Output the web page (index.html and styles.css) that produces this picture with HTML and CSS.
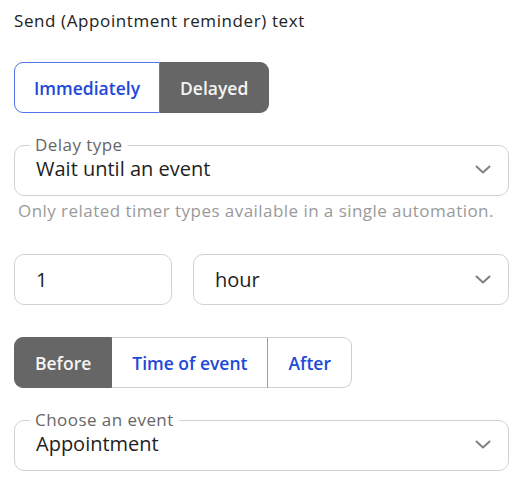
FILE: index.html
```html
<!DOCTYPE html>
<html lang="en">
<head>
<meta charset="utf-8">
<title>Send text</title>
<link rel="stylesheet" href="styles.css">
</head>
<body>
<div class="page">
  <p class="title">Send (Appointment reminder) text</p>

  <div class="seg seg-when">
    <div class="seg-btn is-focus">Immediately</div>
    <div class="seg-btn is-on">Delayed</div>
  </div>

  <fieldset class="field">
    <legend>Delay type</legend>
    <span class="value">Wait until an event</span>
    <svg class="chev" viewBox="0 0 16 9" width="16" height="9"><path d="M1.5 1.5 L8 7.5 L14.5 1.5" fill="none" stroke="#808080" stroke-width="2" stroke-linecap="round" stroke-linejoin="round"/></svg>
  </fieldset>
  <p class="help">Only related timer types available in a single automation.</p>

  <div class="row">
    <div class="box box-num"><span class="value">1</span></div>
    <div class="box box-unit">
      <span class="value">hour</span>
      <svg class="chev" viewBox="0 0 16 9" width="16" height="9"><path d="M1.5 1.5 L8 7.5 L14.5 1.5" fill="none" stroke="#808080" stroke-width="2" stroke-linecap="round" stroke-linejoin="round"/></svg>
    </div>
  </div>

  <div class="seg seg-rel">
    <div class="seg-btn is-on">Before</div>
    <div class="seg-btn">Time of event</div>
    <div class="seg-btn">After</div>
  </div>

  <fieldset class="field field-event">
    <legend>Choose an event</legend>
    <span class="value">Appointment</span>
    <svg class="chev" viewBox="0 0 16 9" width="16" height="9"><path d="M1.5 1.5 L8 7.5 L14.5 1.5" fill="none" stroke="#808080" stroke-width="2" stroke-linecap="round" stroke-linejoin="round"/></svg>
  </fieldset>
</div>
</body>
</html>
```

FILE: styles.css
```css
* { box-sizing: border-box; }
html, body { margin: 0; padding: 0; background: #fff; }
body {
  font-family: "Open Sans", "DejaVu Sans", sans-serif;
  color: #222;
}
.page {
  width: 520px;
  padding: 11px 11px 0 14px;
  display: flex;
  flex-direction: column;
  align-items: flex-start;
}
.title {
  margin: 0;
  font-size: 17px;
  letter-spacing: 0.6px;
  line-height: 20px;
  color: #222;
}
.seg {
  display: flex;
  height: 51px;
  margin-top: 31px;
}
.seg-btn {
  display: flex;
  align-items: center;
  justify-content: center;
  padding: 0 20px;
  font-size: 17.5px;
  font-weight: 600;
  color: #2148d8;
  background: #fff;
  border: 1px solid #cfcfcf;
  border-left-width: 0;
}
.seg-btn:first-child {
  border-left-width: 1px;
  border-radius: 9px 0 0 9px;
}
.seg-btn:last-child {
  border-radius: 0 9px 9px 0;
}
.seg-btn:not(:last-child) {
  border-right-color: #9c9c9c;
}
.seg-btn.is-on {
  background: #666;
  border-color: #666;
  color: #f4f4f4;
}
.seg-btn.is-focus {
  border-color: #4f76ea;
  padding: 0 19px;
}
.field {
  align-self: stretch;
  margin: 22px 0 0 0;
  padding: 0 17px 12px 21px;
  border: 1px solid #d2d2d2;
  border-radius: 10px;
  display: flex;
  align-items: center;
  justify-content: space-between;
  min-width: 0;
}
.field legend {
  margin-left: -6px;
  padding: 0 5px 0 5px;
  font-size: 17px;
  letter-spacing: 0.45px;
  line-height: 20px;
  color: #666;
}
.value {
  font-size: 20px;
  line-height: 28px;
  color: #1e1e1e;
}
.chev { display: block; }
.help {
  margin: 5px 0 0 4px;
  font-size: 17px;
  letter-spacing: 0.45px;
  line-height: 20px;
  color: #9a9a9a;
}
.row {
  align-self: stretch;
  display: flex;
  gap: 21px;
  margin-top: 33px;
}
.box {
  height: 51px;
  border: 1px solid #d2d2d2;
  border-radius: 10px;
  display: flex;
  align-items: center;
  padding: 0 17px 0 21px;
}
.box-num { width: 158px; }
.box-unit { flex: 1; justify-content: space-between; }
.seg-rel { margin-top: 32px; }
.field-event { margin-top: 22px; }
```
